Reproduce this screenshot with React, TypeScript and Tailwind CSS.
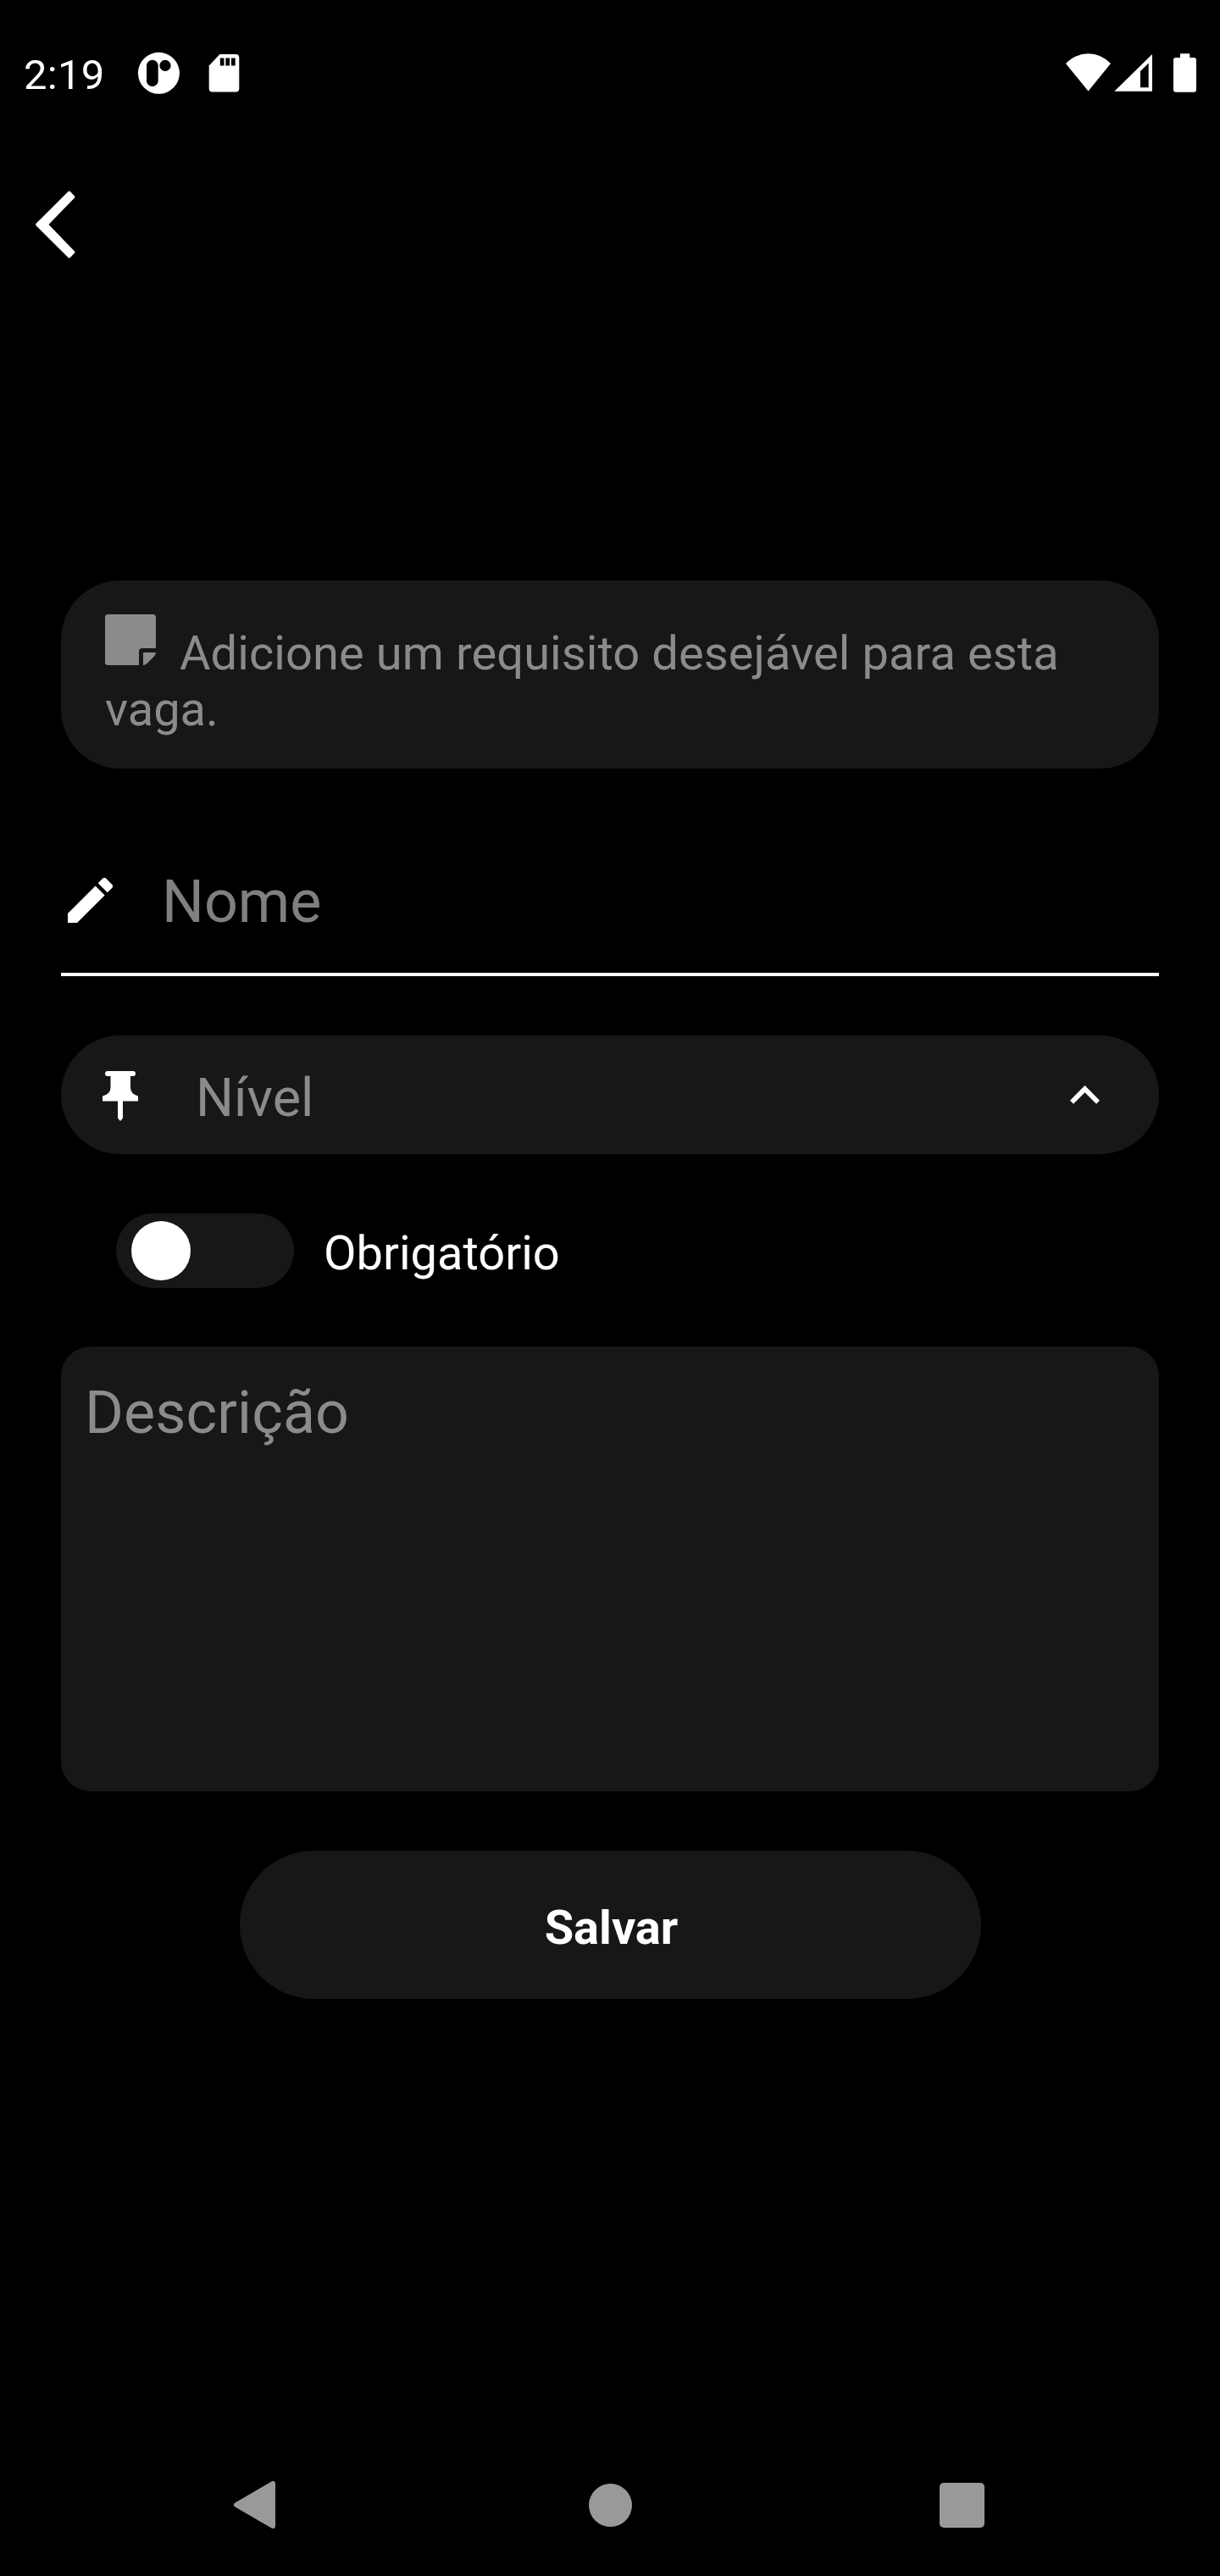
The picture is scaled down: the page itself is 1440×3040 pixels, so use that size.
import { useState } from "react";

function StatusBar() {
  return (
    <header className="flex h-[172px] items-start justify-between pl-[28px] pt-[59px]">
      <div className="flex">
        <span className="mt-px w-[133px] text-[49px] leading-[58px] tracking-[0.3px] text-white">2:19</span>
        <svg className="mt-[2px] h-[52px] w-[52px]" viewBox="161 61 52 52" fill="#fff">
          <circle cx="187.4" cy="86.3" r="24.5" />
          <rect x="173" y="70.7" width="13.7" height="31.3" rx="6.8" fill="#000" />
          <circle cx="195" cy="77.4" r="6.6" fill="#000" />
        </svg>
        <svg className="ml-[30px] mt-[2px] h-[52px] w-[44px]" viewBox="243 61 44 52" fill="#fff">
          <path d="M259.500 64H278.300a4 4 0 0 1 4 4V104.500a4 4 0 0 1-4 4H250.700a4 4 0 0 1-4-4V77.500Z" />
          <path d="M259.800 68.500h4.700v9h-4.700zM266.400 68.500h4.700v9h-4.700zM273 68.500h4.700v9H273z" fill="#000" />
        </svg>
      </div>
      <svg className="mt-px h-[52px] w-[190px]" viewBox="1250 60 190 52" fill="#fff">
        <path d="M1284.500 107.500L1258 75Q1269.500 63.300 1284.500 63.300T1311 75Z" />
        <path fillRule="evenodd" d="M1360 64V107.700H1315.300ZM1355.700 74.600L1346 84V103.300H1355.700Z" />
        <path d="M1393 63.200H1404.300V68H1409a3 3 0 0 1 3 3V105.700a3 3 0 0 1-3 3H1388a3 3 0 0 1-3-3V71a3 3 0 0 1 3-3H1393Z" />
      </svg>
    </header>
  );
}

function BackButton() {
  return (
    <button aria-label="Voltar" className="ml-[35px] mt-[48px] block h-[90px] w-[60px]">
      <svg className="h-[90px] w-[60px]" viewBox="35 220 60 90">
        <path
          d="M81.700 227.700L86.300 232.300L54.600 265L86.300 297.700L81.700 302.300L44.200 265Z"
          fill="#fff"
          stroke="#fff"
          strokeWidth="4"
          strokeLinejoin="round"
        />
      </svg>
    </button>
  );
}

function Hint() {
  return (
    <section className="h-[222px] rounded-[70px] bg-[#171717] pl-[52px] pt-[53px] text-[56px] leading-[66px] text-[#8b8b8b]">
      <div className="flex h-[66px] items-start">
        <svg className="-mt-[13px] mr-[28px] h-[60px] w-[60px] shrink-0" viewBox="0 0 60 60" fill="#8b8b8b">
          <path d="M3.500 0H56.500A3.500 3.500 0 0 1 60 3.500V40H44a4 4 0 0 0-4 4V60H3.500A3.500 3.500 0 0 1 0 56.500V3.500A3.500 3.500 0 0 1 3.500 0Z" />
          <path d="M45 45H60a8 8 0 0 1-2.500 5L50 57.500a8 8 0 0 1-5 2.500Z" />
        </svg>
        <span className="whitespace-nowrap tracking-[0.08px]">Adicione um requisito desejável para esta</span>
      </div>
      <div>vaga.</div>
    </section>
  );
}

function NameField() {
  return (
    <div className="mt-[71px] flex h-[174px] border-b-4 border-white pt-[45px]">
      <svg className="ml-[8px] mt-[13px] h-[53px] w-[53px]" viewBox="3 3 18 18" fill="#fff">
        <path d="M3 17.250V21h3.750L17.810 9.940l-3.750-3.750L3 17.250zM20.710 7.040a1 1 0 0 0 0-1.410l-2.340-2.340a1 1 0 0 0-1.410 0l-1.830 1.830 3.750 3.750 1.830-1.830z" />
      </svg>
      <span className="ml-[58px] text-[70px] leading-[82px] text-[#808080]">Nome</span>
    </div>
  );
}

function LevelSelect() {
  return (
    <button className="mt-[70px] flex h-[140px] w-full items-center rounded-[70px] bg-[#171717] pl-[49px] pr-[70px]">
      <svg className="mt-px h-[60px] w-[42px]" viewBox="121 1262.500 42 60" fill="#fff">
        <path d="M127 1263.500H157a3 3 0 0 1 0 6H154V1283Q154 1290.500 163 1293V1299H145V1319L142 1322.500L139 1319V1299H121V1293Q130.500 1290.500 130.500 1283V1269.500H127a3 3 0 0 1 0-6Z" />
      </svg>
      <span className="ml-[68px] mt-[7px] text-[63px] leading-[74px] text-[#8b8b8b]">Nível</span>
      <svg className="ml-auto h-[22px] w-[35px]" viewBox="1263.500 1281.200 35 22" fill="#fff">
        <path d="M1281 1281.200L1298.500 1298.900L1294.500 1303L1281 1289.500L1267.500 1303L1263.500 1298.900Z" />
      </svg>
    </button>
  );
}

function RequiredToggle() {
  const [on, setOn] = useState(false);
  return (
    <div className="ml-[65px] mt-[70px] flex h-[88px] items-center">
      <button
        role="switch"
        aria-checked={on}
        aria-label="Obrigatório"
        onClick={() => setOn(!on)}
        className={`flex h-[88px] w-[210px] items-center rounded-full bg-[#171717] px-[17.5px] ${on ? "justify-end" : "justify-start"}`}
      >
        <span className="h-[70px] w-[70px] rounded-full bg-white" />
      </button>
      <span className="ml-[35px] mt-[6px] text-[56px] leading-[66px] text-white">Obrigatório</span>
    </div>
  );
}

function NavBar() {
  return (
    <nav className="mt-auto flex h-[168px] items-center pl-[275px]">
      <svg className="h-[58px] w-[51px]" viewBox="275 2927 51 58" fill="#999">
        <path
          d="M279 2956L322 2931V2981Z"
          stroke="#999"
          strokeWidth="6"
          strokeLinejoin="round"
        />
      </svg>
      <span className="ml-[368.5px] h-[51px] w-[51px] rounded-full bg-[#999]" />
      <span className="ml-[363px] h-[53px] w-[53px] rounded-[5px] bg-[#999]" />
    </nav>
  );
}

export default function App() {
  return (
    <div className="flex h-[3040px] w-[1440px] flex-col overflow-hidden bg-black font-['Roboto',sans-serif]">
      <StatusBar />
      <BackButton />
      <main className="mx-[72px] mt-[375px] flex flex-col">
        <Hint />
        <NameField />
        <LevelSelect />
        <RequiredToggle />
        <div className="mt-[69px] h-[525px] rounded-[35px] bg-[#171717] pl-[28px] pt-[37px] text-[70px] leading-[82px] tracking-[0.1px] text-[#8b8b8b]">
          Descrição
        </div>
        <button className="mt-[70px] h-[175px] w-[875px] self-center rounded-full bg-[#171717] pl-[3px] pt-[7px] text-[56px] font-bold leading-[66px] text-white">
          Salvar
        </button>
      </main>
      <NavBar />
    </div>
  );
}
